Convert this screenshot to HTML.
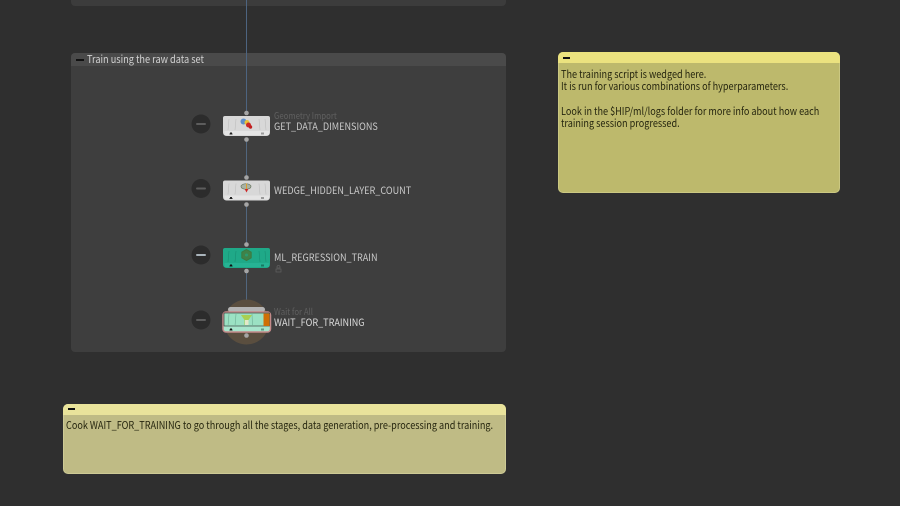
<!DOCTYPE html>
<html><head><meta charset="utf-8">
<style>
html,body{margin:0;padding:0;background:#2f2f2f;}
body{width:900px;height:506px;position:relative;overflow:hidden;font-family:"Noto Sans CJK JP","Liberation Sans",sans-serif;font-size:11px;}
.a{position:absolute;}
.x{white-space:pre;transform-origin:0 0;}
.t{font-size:10.5px;line-height:12.33px;color:#26260f;transform:scaleX(.868);}
.lbl{color:#c9c9c9;font-size:10px;line-height:13px;transform:scaleX(.908);}
.sub{color:#606060;font-size:9px;line-height:12px;transform:scaleX(.865);}
.note{box-shadow:inset 0 0 0 1px rgba(255,255,210,.22);}
</style></head><body>
<div class="a" style="left:71px;top:-10px;width:435px;height:16px;background:#3c3c3c;border-radius:4px;"></div>
<div class="a" style="left:71px;top:53px;width:435px;height:299px;background:#3e3e3e;border-radius:4px;overflow:hidden;"><div style="height:13px;background:#4a4a4a;"></div></div>
<div class="a" style="left:76px;top:59px;width:8px;height:1.5px;background:#111;"></div>
<div class="a x" style="left:87px;top:53px;color:#d2d2d2;font-size:10.5px;line-height:14px;transform:scaleX(.875);">Train using the raw data set</div>

<svg class="a" style="left:0;top:0;" width="900" height="506" viewBox="0 0 900 506">
<defs><path id="n" d="M225 116h43a2 2 0 0 1 2 2v14.500a3.500 3.500 0 0 1-3.500 3.500h-40a3.500 3.500 0 0 1-3.500-3.500v-14.500a2 2 0 0 1 2-2z"/></defs>
<line x1="246.500" y1="0" x2="246.500" y2="112" stroke="#4d6480"/>
<line x1="246.500" y1="140" x2="246.500" y2="176" stroke="#51667e"/>
<line x1="246.500" y1="205" x2="246.500" y2="243" stroke="#51667e"/>
<line x1="246.500" y1="270" x2="246.500" y2="307" stroke="#51667e"/>
<circle cx="246.500" cy="322" r="22.500" fill="#5a4e3f"/>

<g fill="#2c2c2c"><circle cx="201" cy="124" r="9.500"/><circle cx="201" cy="188.500" r="9.500"/><circle cx="201" cy="255" r="9.500"/><circle cx="201" cy="320" r="9.500"/></g>
<g fill="#5d5d5d"><rect x="196" y="123" width="10" height="2" rx="1"/><rect x="196" y="187.500" width="10" height="2" rx="1"/><rect x="196" y="319" width="10" height="2" rx="1"/></g>
<rect x="196" y="254" width="10" height="2" rx="1" fill="#a9b4bb"/>

<!-- node 1 -->
<g><use href="#n" fill="#d8d8d8"/><rect x="224.500" y="131" width="44.500" height="4" fill="#e4e4e4"/>
<path d="M229 119l-1 11M236 119l-1 11M259 119l1 11M265 119l1 11" stroke="#bebebe" stroke-width=".6"/>
<path d="M230 132.500h2v1h-2zM229.500 133.500h3v1h-3z" fill="#222"/><path d="M261 132.500h3v2h-3z" fill="#9a9a9a"/>
<circle cx="243.500" cy="121.500" r="3" fill="#5f8fc9"/><circle cx="247" cy="122.500" r="2.500" fill="#e8c33a"/><circle cx="248.500" cy="125" r="2.500" fill="#cc2828"/><circle cx="250.500" cy="127" r="1.700" fill="#c02020"/></g>
<!-- node 2 -->
<g transform="translate(0,64.500)"><use href="#n" fill="#d8d8d8"/><rect x="224.500" y="131" width="44.500" height="4" fill="#e4e4e4"/>
<path d="M229 119l-1 11M236 119l-1 11M259 119l1 11M265 119l1 11" stroke="#bebebe" stroke-width=".6"/>
<path d="M230 132.500h2v1h-2zM229.500 133.500h3v1h-3z" fill="#222"/><path d="M261 132.500h3v2h-3z" fill="#9a9a9a"/>
<ellipse cx="246" cy="122" rx="5" ry="2.800" fill="#aab2a4" stroke="#6c7a66" stroke-width=".7"/><path d="M246.500 119v6" stroke="#d8a030" stroke-width="1"/><path d="M246.500 128l-1.800-3.500h3.600z" fill="#cc2525"/></g>
<!-- node 3 -->
<g transform="translate(0,132)"><use href="#n" fill="#1fa988"/><rect x="224.500" y="131" width="44.500" height="4" fill="#26b394"/>
<path d="M229 119l-1 11M236 119l-1 11M259 119l1 11M265 119l1 11" stroke="#178f73" stroke-width=".6"/>
<path d="M230 132.500h2v1h-2zM229.500 133.500h3v1h-3z" fill="#111"/><path d="M261 132.500h3v2h-3z" fill="#177a62"/>
<path d="M246.500 117.500l4.700 2.700v5.600l-4.700 2.700-4.700-2.700v-5.600z" fill="#3f8249" stroke="#3a7a42"/><circle cx="246.500" cy="123" r="1.500" fill="#2a9a70"/></g>
<!-- node 4 -->
<rect x="228" y="307" width="37" height="5" rx="2.500" fill="#b4b4b4"/>
<rect x="223" y="312" width="47.500" height="20" rx="3" fill="#a7e5cc" stroke="#c48a8a" stroke-width="1.500"/>
<rect x="224" y="313" width="45.500" height="13" fill="#9be1c3" stroke="#2a2a2a" stroke-width=".6"/>
<rect x="263.500" y="313.500" width="6" height="12.500" fill="#cf6f05"/>
<path d="M229 314l-1 12M236 314l-1 12M252 314l.5 12" stroke="#6fae95" stroke-width=".6"/>
<path d="M241 315h11l-3.500 5v5h-4v-5z" fill="#a9cf52"/><rect x="245" y="320" width="3.500" height="5" fill="#e4e8c8"/>
<path d="M230 328.500h2v1h-2zM229.500 329.500h3v1h-3z" fill="#111"/><path d="M261 328.500h3v2h-3z" fill="#5f9985"/>

<g fill="#a5a5a5"><circle cx="246.500" cy="113" r="2.300"/><circle cx="246.500" cy="139.500" r="2.300"/><circle cx="246.500" cy="177.500" r="2.300"/><circle cx="246.500" cy="204.500" r="2.300"/><circle cx="246.500" cy="244.500" r="2.300"/><circle cx="246.500" cy="271" r="2.300"/><circle cx="246.500" cy="335.500" r="2.300"/></g>
<path d="M278.500 265.500a1.500 1.500 0 0 1 1.500 1.500v1h-3v-1a1.500 1.500 0 0 1 1.500-1.500zM276 269h5v3h-5z" fill="none" stroke="#5e5e5e" stroke-width=".8"/>
</svg>

<div class="a x sub" style="left:274px;top:110px;">Geometry Import</div>
<div class="a x lbl" style="left:274px;top:119px;">GET_DATA_DIMENSIONS</div>
<div class="a x lbl" style="left:274px;top:183px;">WEDGE_HIDDEN_LAYER_COUNT</div>
<div class="a x lbl" style="left:274px;top:250px;">ML_REGRESSION_TRAIN</div>
<div class="a x sub" style="left:274px;top:306px;">Wait for All</div>
<div class="a x lbl" style="left:274px;top:315px;color:#dcdcdc;">WAIT_FOR_TRAINING</div>

<div class="a note" style="left:558px;top:52px;width:282px;height:141px;background:#bdb96c;border-radius:5px;overflow:hidden;"><div style="height:11px;background:#ebe27f;"></div></div>
<div class="a" style="left:563px;top:57px;width:7px;height:1.500px;background:#111;"></div>
<div class="a x t" style="left:561px;top:69px;">The training script is wedged here.
It is run for various combinations of hyperparameters.

Look in the $HIP/ml/logs folder for more info about how each
training session progressed.</div>

<div class="a note" style="left:63px;top:404px;width:443px;height:70px;background:#bfbb85;border-radius:5px;overflow:hidden;"><div style="height:11px;background:#e9e39b;"></div></div>
<div class="a" style="left:68px;top:408px;width:7px;height:1.500px;background:#111;"></div>
<div class="a x t" style="left:65.500px;top:420px;">Cook WAIT_FOR_TRAINING to go through all the stages, data generation, pre-processing and training.</div>
</body></html>
